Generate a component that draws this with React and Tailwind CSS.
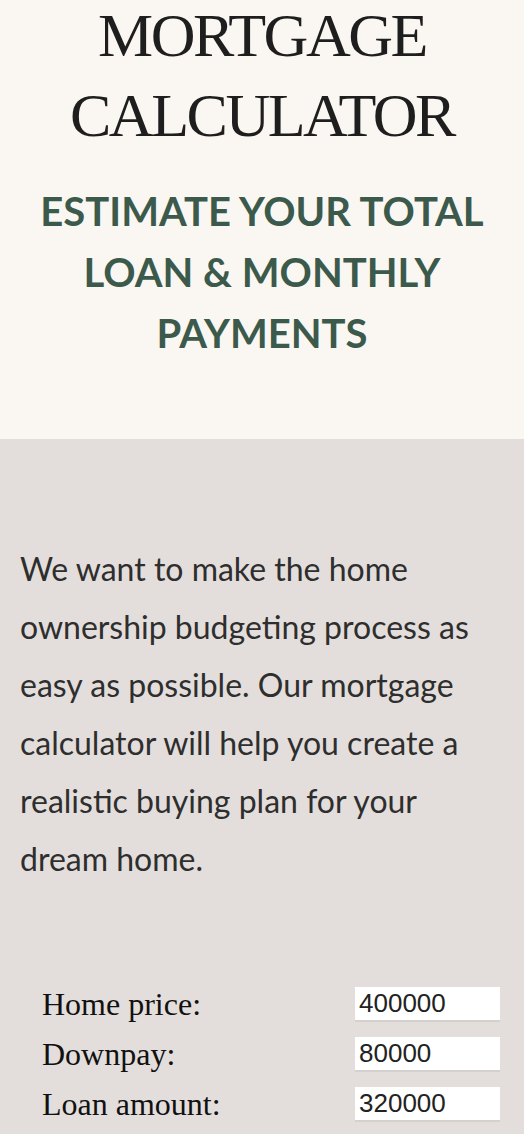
import { useState } from "react";

const fields = [
  { key: "price", label: "Home price:", value: "400000" },
  { key: "down", label: "Downpay:", value: "80000" },
  { key: "loan", label: "Loan amount:", value: "320000" },
];

function CalculatorForm() {
  const [values, setValues] = useState(
    Object.fromEntries(fields.map((field) => [field.key, field.value]))
  );

  return (
    <div className="flex flex-col pl-[42px] pr-[24px]">
      {fields.map((field) => (
        <div key={field.key} className="flex h-[50px] items-center justify-between">
          <label
            htmlFor={field.key}
            className="text-[32px] leading-[50px] text-[#111] font-['Liberation_Serif',serif]"
          >
            {field.label}
          </label>
          <input
            id={field.key}
            type="text"
            value={values[field.key]}
            onChange={(event) =>
              setValues((prev) => ({ ...prev, [field.key]: event.target.value }))
            }
            className="h-[35px] w-[145px] border-0 border-b-2 border-[#d4d0cd] bg-white px-[4px] text-[26px] text-[#222] outline-none font-['Liberation_Sans',Arial,sans-serif]"
          />
        </div>
      ))}
    </div>
  );
}

export default function App() {
  return (
    <div className="min-h-[1134px] w-[524px] overflow-hidden bg-[#e3dedb]">
      <header className="flow-root h-[439px] bg-[#faf7f2] text-center">
        <h1 className="-mt-[5px] text-[62px] leading-[80px] font-normal tracking-[-0.04em] text-[#1e1e1e] font-['Liberation_Serif',serif]">
          MORTGAGE
          <br />
          CALCULATOR
        </h1>
        <h2 className="mx-auto mt-[26px] w-[460px] text-[40px] leading-[61px] font-bold text-[#3c5a4c] font-['Lato',sans-serif]">
          ESTIMATE YOUR TOTAL LOAN &amp; MONTHLY PAYMENTS
        </h2>
      </header>

      <section className="pt-[101px]">
        <p className="px-[20px] text-[32px] leading-[58px] text-[#2e2e2e] font-['Lato',sans-serif]">
          We want to make the home ownership budgeting process as easy as possible. Our
          mortgage calculator will help you create a realistic buying plan for your dream home.
        </p>
        <div className="mt-[91px]">
          <CalculatorForm />
        </div>
      </section>
    </div>
  );
}
